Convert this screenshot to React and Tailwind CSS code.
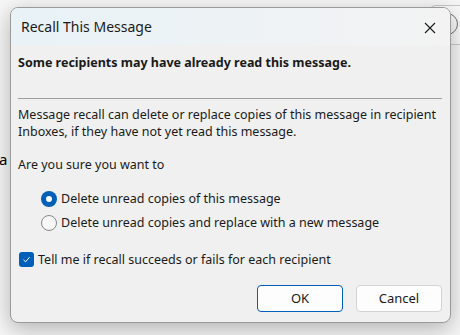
import React from "react";

const font = { fontFamily: '"Noto Sans", "Open Sans", sans-serif' };

const App = () => {
  return (
    <div
      className="relative w-[460px] h-[335px] overflow-hidden bg-[#f6f6f6] text-[#1a1a1a]"
      style={font}
    >
      {/* stuff behind the dialog */}
      <span className="absolute left-[-1px] top-[148px] text-[15px] text-black">a</span>
      <div className="absolute left-[428px] top-[5px] w-[60px] h-[40px] rounded-lg border border-[#c8c8c8] bg-[#f9f9f9]" />
      <div className="absolute left-[436px] top-[13px] w-[22px] h-[22px] rounded-full border border-[#707070]" />

      <div className="relative ml-[10px] mt-[7px] w-[441px] h-[316px] flex flex-col rounded-lg border border-[#9a9a9a] bg-[#f0f0f0] shadow-[0_6px_22px_rgba(0,0,0,0.28)] overflow-hidden">
        <div className="h-[37px] flex items-center justify-between pl-[10px] pr-[14px] bg-gradient-to-r from-[#e8f2f7] to-[#f3f3f3]">
          <span className="text-[14px] text-[#1b1b1b]">Recall This Message</span>
          <svg width="12" height="12" viewBox="0 0 12 12" className="mt-[2px]">
            <path d="M1 1 L11 11 M11 1 L1 11" stroke="#1b1b1b" strokeWidth="1.1" />
          </svg>
        </div>

        <div className="flex flex-col px-[7px] pt-[9px] text-[12.5px] leading-[17px]">
          <p className="font-bold">Some recipients may have already read this message.</p>
          <div className="mt-[27px] h-px bg-[#a0a0a0] mr-[1px]" />
          <p className="mt-[7px]">
            Message recall can delete or replace copies of this message in recipient
            <br />
            Inboxes, if they have not yet read this message.
          </p>
          <p className="mt-[16px]">Are you sure you want to</p>

          <div className="mt-[17px] ml-[23px] flex flex-col gap-[7px]">
            <label className="flex items-center gap-[4px]">
              <span className="w-[16px] h-[16px] rounded-full bg-[#005fb8] flex items-center justify-center">
                <span className="w-[6px] h-[6px] rounded-full bg-white" />
              </span>
              Delete unread copies of this message
            </label>
            <label className="flex items-center gap-[4px]">
              <span className="w-[16px] h-[16px] rounded-full border border-[#878787] bg-[#f7f7f7]" />
              Delete unread copies and replace with a new message
            </label>
          </div>

          <label className="mt-[20px] ml-[1px] flex items-center gap-[4px]">
            <span className="w-[15px] h-[15px] rounded-[3px] bg-[#005fb8] flex items-center justify-center">
              <svg width="9" height="9" viewBox="0 0 9 9">
                <path d="M1.5 4.8 L3.6 6.8 L7.6 2.2" fill="none" stroke="white" strokeWidth="1" />
              </svg>
            </span>
            Tell me if recall succeeds or fails for each recipient
          </label>

          <div className="mt-[17px] flex justify-end gap-[13px] pr-[1px]">
            <button className="w-[86px] h-[27px] rounded-[4px] border border-[#005fb8] bg-[#fdfdfd] text-[13px]">
              OK
            </button>
            <button className="w-[86px] h-[27px] rounded-[4px] border border-[#d3d3d3] bg-[#fdfdfd] text-[13px]">
              Cancel
            </button>
          </div>
        </div>
      </div>
    </div>
  );
};

export default App;
